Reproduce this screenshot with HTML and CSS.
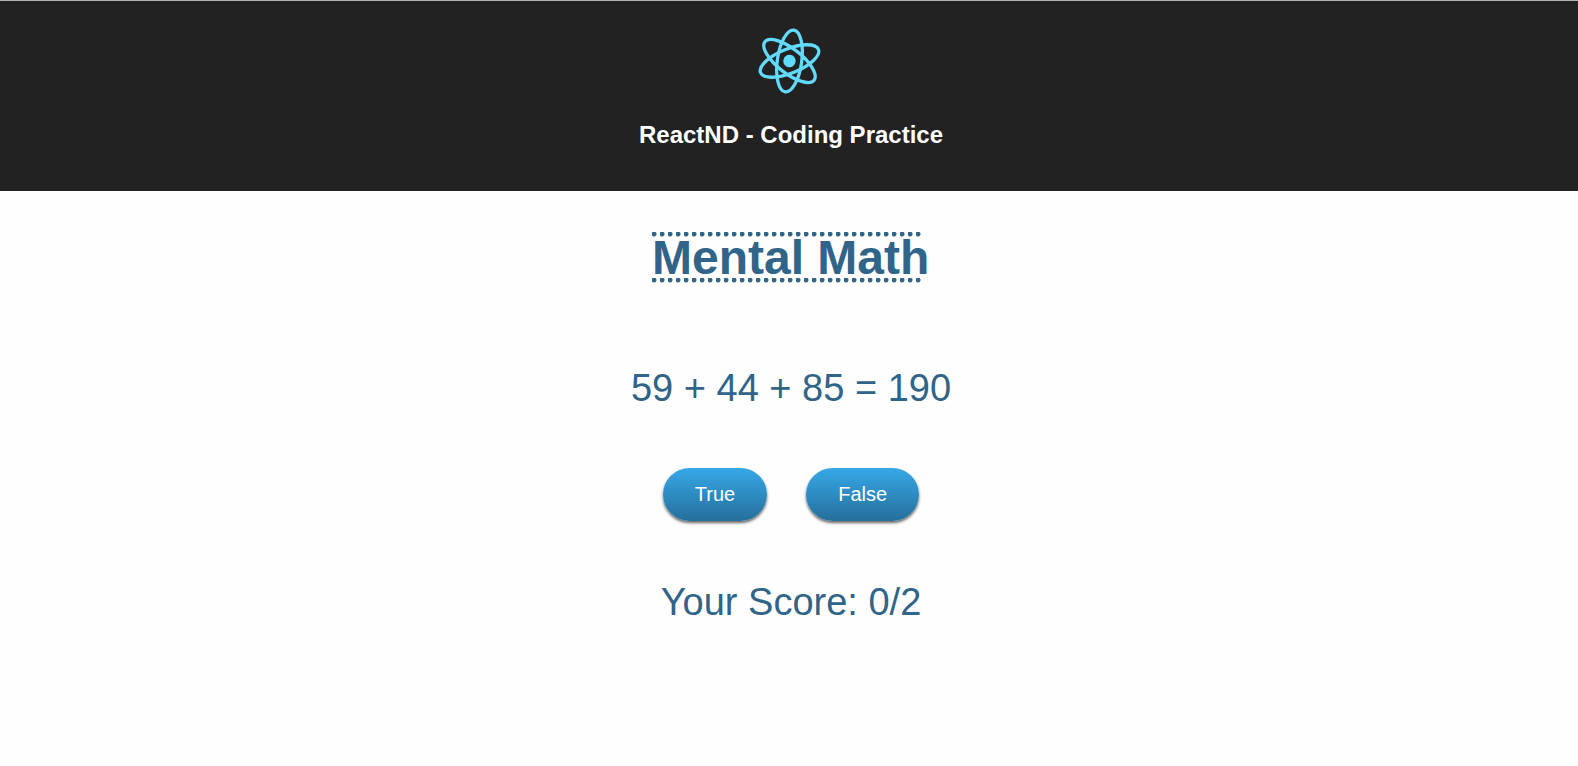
FILE: index.html
```html
<!DOCTYPE html>
<html lang="en">
<head>
<meta charset="utf-8">
<title>Mental Math</title>
<link rel="stylesheet" href="styles.css">
</head>
<body>
<header class="header">
  <svg class="logo" viewBox="0 0 66 68" fill="none" stroke="#61dafb" stroke-width="3.3" aria-hidden="true">
    <g transform="translate(31.5 34) rotate(8)">
      <ellipse rx="12.2" ry="31.2"/>
      <ellipse rx="12.2" ry="31.2" transform="rotate(60)"/>
      <ellipse rx="12.2" ry="31.2" transform="rotate(120)"/>
      <circle r="6.2" fill="#61dafb" stroke="none"/>
    </g>
  </svg>
  <h1 class="header-title">ReactND - Coding Practice</h1>
</header>
<main class="game">
  <h2 class="game-title">Mental Math</h2>
  <p class="equation">59 + 44 + 85 = 190</p>
  <div class="answers">
    <button class="answer" type="button">True</button>
    <button class="answer" type="button">False</button>
  </div>
  <p class="score">Your Score: 0/2</p>
</main>
</body>
</html>
```
FILE: styles.css
```css
* {
  box-sizing: border-box;
}

body {
  margin: 0;
  background: #fefefe;
  color: #306488;
  font-family: Arial, "Liberation Sans", sans-serif;
}

.header {
  display: flex;
  flex-direction: column;
  align-items: center;
  gap: 26px;
  padding: 26px 0 42px 4px;
  border-top: 1px solid #b0b0b0;
  background: #222;
  color: #fff;
}

.logo {
  width: 66px;
  height: 68px;
}

.header-title {
  margin: 0;
  font-size: 24px;
  line-height: 28px;
}

.game {
  display: flex;
  flex-direction: column;
  align-items: center;
  padding: 41px 0 40px 4px;
}

/* Rows of round dots run along the top and bottom edges. */
.game-title {
  width: 272px;
  margin: 0 6px 0 0;
  padding: 5px 0 4px;
  background-image:
    radial-gradient(circle at 2px 2px, #306488 2px, transparent 3px),
    radial-gradient(circle at 2px 2px, #306488 2px, transparent 3px);
  background-position: left top, left bottom;
  background-repeat: repeat-x;
  background-size: 8px 5px;
  font-size: 48px;
  line-height: 42px;
  white-space: nowrap;
}

.equation,
.score {
  margin: 0;
  font-size: 38px;
  line-height: 44px;
}

.equation {
  margin-top: 83px;
}

.answers {
  display: flex;
  gap: 39px;
  margin: 58px 0 59px;
}

.answer {
  padding: 15px 32px;
  border: 0;
  border-radius: 28px;
  background: linear-gradient(#36a8e8, #256f9b);
  box-shadow: 0 2px 3px #666;
  color: #fff;
  font-family: inherit;
  font-size: 20px;
  line-height: 23px;
}
```
